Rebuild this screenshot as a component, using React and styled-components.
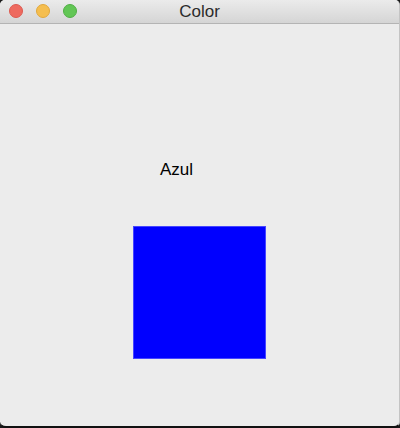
import React from 'react';
import styled, { createGlobalStyle } from 'styled-components';

const GlobalStyle = createGlobalStyle`
    html, body {
        margin: 0;
        padding: 0;
        background: #1a1a1a;
    }
    body {
        font-family: "Liberation Sans", Arial, sans-serif;
    }
`;

const Window = styled.div`
    width: 400px;
    height: 428px;
    box-sizing: border-box;
    display: flex;
    flex-direction: column;
    background-color: #ececec;
    border-radius: 5px 5px 6px 6px;
    border-right: 1px solid #c4c4c4;
    border-bottom: 2px solid #111;
    overflow: hidden;
`;

const TitleBar = styled.div`
    position: relative;
    height: 23px;
    flex-shrink: 0;
    display: flex;
    align-items: center;
    justify-content: center;
    background: linear-gradient(#ebebeb, #d5d5d5);
    border-bottom: 1px solid #b4b4b4;
    font-size: 17px;
    color: #2b2b2b;
`;

const Lights = styled.div`
    position: absolute;
    left: 9px;
    top: 4px;
    display: flex;
    gap: 13px;
`;

const Light = styled.span`
    display: block;
    width: 14px;
    height: 14px;
    flex-shrink: 0;
    border-radius: 50%;
    box-sizing: border-box;
    background-color: ${({ color }) => color};
    border: 1px solid ${({ edge }) => edge};
`;

const Content = styled.div`
    flex: 1;
    display: flex;
    flex-direction: column;
`;

const Label = styled.div`
    margin: 136px 0 0 160px;
    font-size: 17px;
    line-height: 20px;
    color: #000;
`;

const Swatch = styled.div`
    margin: 46px 0 0 133px;
    width: 133px;
    height: 133px;
    box-sizing: border-box;
    background-color: ${({ color }) => color};
    border: 1px solid #4646ff;
`;

export default function App() {
    return (
        <>
            <GlobalStyle />
            <Window>
                <TitleBar>
                    <Lights>
                        <Light color="#ee6a5f" edge="#dc5a50" />
                        <Light color="#f5be4f" edge="#e0a73c" />
                        <Light color="#62c655" edge="#50ae44" />
                    </Lights>
                    Color
                </TitleBar>
                <Content>
                    <Label>Azul</Label>
                    <Swatch color="#0000ff" />
                </Content>
            </Window>
        </>
    );
}
